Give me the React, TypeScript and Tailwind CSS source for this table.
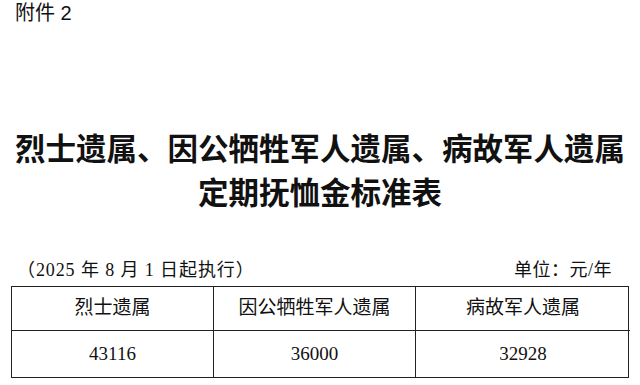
export default function App() {
  const serif = "font-['Liberation_Serif','Noto_Sans_CJK_SC',serif]";
  const sans = "font-['Liberation_Sans','Noto_Sans_CJK_SC',sans-serif]";
  const cols = [
    { name: "烈士遗属", amount: "43116" },
    { name: "因公牺牲军人遗属", amount: "36000" },
    { name: "病故军人遗属", amount: "32928" },
  ];

  return (
    <div className="w-[640px] h-[385px] bg-white text-[#111] overflow-hidden">
      {/* 附件标注 */}
      <p className={`${sans} pl-[15px] pt-[1px] text-[20px] leading-[24px]`}>附件 2</p>

      {/* 标题 */}
      <div className="mt-[100px] flex flex-col items-center font-['Noto_Sans_CJK_SC',serif] font-bold text-[30.5px] leading-[44px]">
        <h1>烈士遗属、因公牺牲军人遗属、病故军人遗属</h1>
        <h1>定期抚恤金标准表</h1>
      </div>

      {/* 执行日期 / 单位 */}
      <div className={`${serif} mt-[46px] flex items-end justify-between pl-[17px] pr-[28px] text-[18px] leading-[22px]`}>
        <span className="tracking-[0.9px]">（2025 年 8 月 1 日起执行）</span>
        <span className="tracking-[0.5px]">单位：元/年</span>
      </div>

      {/* 表格 */}
      <div className="ml-[11px] mt-[5px] w-[618px] grid grid-cols-[202px_202px_214px] border-[1.5px] border-[#222]">
        {cols.map((c, i) => (
          <div
            key={c.name}
            className={`${sans} h-[44px] flex items-center justify-center text-[19px] border-b-[1.5px] border-[#222] ${i < 2 ? "border-r-[1.5px]" : ""}`}
          >
            {c.name}
          </div>
        ))}
        {cols.map((c, i) => (
          <div
            key={c.amount}
            className={`${serif} h-[46px] flex items-center justify-center text-[19px] border-[#222] ${i < 2 ? "border-r-[1.5px]" : ""}`}
          >
            {c.amount}
          </div>
        ))}
      </div>
    </div>
  );
}
